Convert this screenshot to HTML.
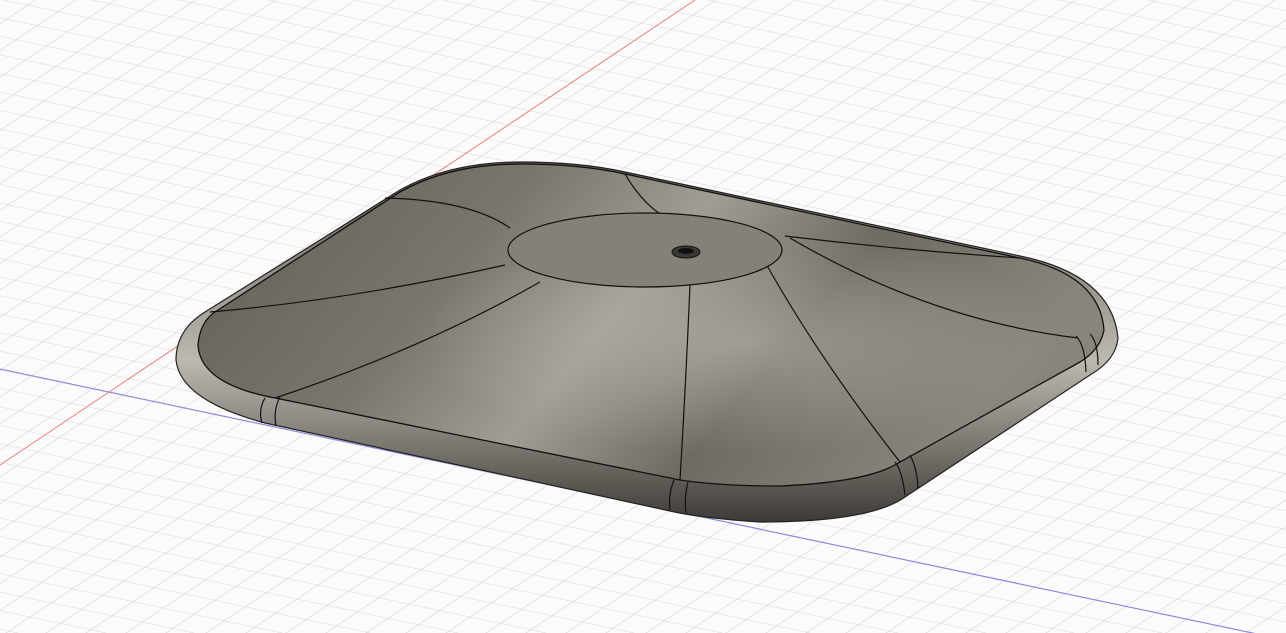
<!DOCTYPE html>
<html><head><style>html,body{margin:0;padding:0;background:#fafafa;width:1286px;height:633px;overflow:hidden}</style></head>
<body>
<svg width="1286" height="633" viewBox="0 0 1286 633" xmlns="http://www.w3.org/2000/svg">
<defs>
<pattern id="g" width="32" height="32" patternUnits="userSpaceOnUse" patternTransform="matrix(0.95,0.2,0.66,-0.44,0,370)">
<path d="M0 0H32M0 0V32" stroke="#cbcbcb" stroke-width="1.4" fill="none"/>
</pattern>
<linearGradient id="body" x1="0" y1="0" x2="1" y2="0.3">
<stop offset="0" stop-color="#615d56"/><stop offset="0.35" stop-color="#7a766d"/>
<stop offset="0.55" stop-color="#a29d94"/><stop offset="0.75" stop-color="#6f6a62"/><stop offset="1" stop-color="#8a857c"/>
</linearGradient>
<radialGradient id="shine" cx="0.6" cy="0.55" r="0.35">
<stop offset="0" stop-color="#bcb8b0" stop-opacity="0.6"/><stop offset="1" stop-color="#bcb8b0" stop-opacity="0"/>
</radialGradient>
<linearGradient id="rim" x1="0" y1="0" x2="0" y2="1">
<stop offset="0" stop-color="#5e5a53"/><stop offset="0.55" stop-color="#bdb9b1"/><stop offset="1" stop-color="#3e3b36"/>
</linearGradient>
</defs>
<rect width="1286" height="633" fill="#fbfbfb"/>
<rect width="1286" height="633" fill="url(#g)"/>
<line x1="0" y1="465" x2="695" y2="0" stroke="#e88080" stroke-width="1"/>
<line x1="0" y1="369" x2="1286" y2="640" stroke="#8080e0" stroke-width="1"/>
<path d="M400,190 Q450,162 520,162 Q580,162 625,172 L1020,256 Q1112,275 1118,338 Q1116,360 1090,375 L905,497 Q870,522 760,522 Q700,518 670,511 L265,423 Q180,400 176,360 Q176,330 205,312 Z" fill="url(#rim)" stroke="#222" stroke-width="1.2"/>
<path d="M400,192 Q450,164 520,164 Q580,164 625,174 L1020,258 Q1100,275 1104,330 Q1100,350 1080,362 L900,462 Q870,482 780,486 Q720,486 680,480 L275,398 Q200,384 198,345 Q200,322 215,312 Z" fill="url(#body)" stroke="#111" stroke-width="1.3"/>
<path d="M400,192 Q450,164 520,164 Q580,164 625,174 L1020,258 Q1100,275 1104,330 Q1100,350 1080,362 L900,462 Q870,482 780,486 Q720,486 680,480 L275,398 Q200,384 198,345 Q200,322 215,312 Z" fill="url(#shine)"/>
<g stroke="#111" stroke-width="1.2" fill="none">
<path d="M210,312 Q350,300 505,265"/>
<path d="M275,398 Q420,350 540,282"/>
<path d="M680,480 Q686,380 690,285"/>
<path d="M900,462 Q820,360 765,262"/>
<path d="M1078,338 Q930,320 790,238"/>
<path d="M1020,258 Q900,250 785,236"/>
<path d="M385,198 Q470,200 510,228"/>
<path d="M625,174 Q640,200 660,214"/>
<path d="M265,398 Q258,410 262,423"/>
<path d="M280,397 Q273,410 276,426"/>
<path d="M674,480 Q668,495 670,510"/>
<path d="M688,482 Q684,497 686,513"/>
<path d="M895,462 Q902,470 905,495"/>
<path d="M910,455 Q917,468 918,488"/>
<path d="M1076,336 Q1085,345 1086,372"/>
<path d="M1090,334 Q1098,342 1098,365"/>
</g>
<ellipse cx="645" cy="250" rx="137" ry="37" fill="#858078" stroke="#111" stroke-width="1.2"/>
<ellipse cx="686" cy="252" rx="14" ry="6" fill="#3a3834" stroke="#111"/>
<ellipse cx="686" cy="251" rx="8" ry="3" fill="#111"/>
</svg>
</body></html>
